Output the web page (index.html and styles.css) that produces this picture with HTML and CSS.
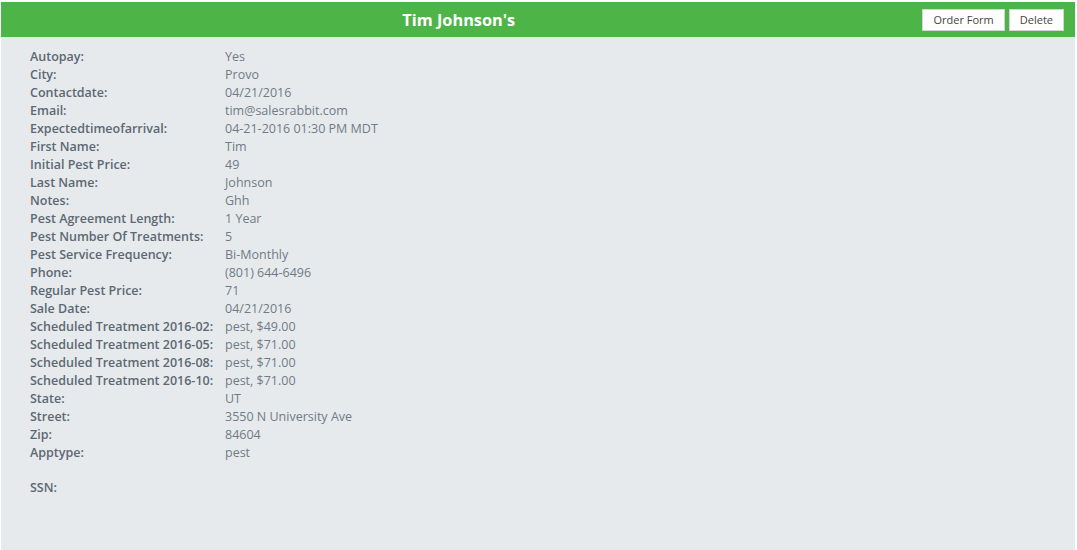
FILE: index.html
```html
<!DOCTYPE html>
<html lang="en">
<head>
  <meta charset="UTF-8">
  <meta name="viewport" content="width=device-width, initial-scale=1.0">
  <title>Tim Johnson's</title>
  <link rel="stylesheet" href="styles.css">
</head>
<body>
  <div class="panel">
    <div class="panel-header">
      <div class="panel-title">Tim Johnson's</div>
      <div class="panel-actions">
        <button class="btn">Order Form</button>
        <button class="btn">Delete</button>
      </div>
    </div>
    <div class="panel-body">
      <div class="row"><div class="label">Autopay:</div><div class="value">Yes</div></div>
      <div class="row"><div class="label">City:</div><div class="value">Provo</div></div>
      <div class="row"><div class="label">Contactdate:</div><div class="value">04/21/2016</div></div>
      <div class="row"><div class="label">Email:</div><div class="value">tim@salesrabbit.com</div></div>
      <div class="row"><div class="label">Expectedtimeofarrival:</div><div class="value">04-21-2016 01:30 PM MDT</div></div>
      <div class="row"><div class="label">First Name:</div><div class="value">Tim</div></div>
      <div class="row"><div class="label">Initial Pest Price:</div><div class="value">49</div></div>
      <div class="row"><div class="label">Last Name:</div><div class="value">Johnson</div></div>
      <div class="row"><div class="label">Notes:</div><div class="value">Ghh</div></div>
      <div class="row"><div class="label">Pest Agreement Length:</div><div class="value">1 Year</div></div>
      <div class="row"><div class="label">Pest Number Of Treatments:</div><div class="value">5</div></div>
      <div class="row"><div class="label">Pest Service Frequency:</div><div class="value">Bi-Monthly</div></div>
      <div class="row"><div class="label">Phone:</div><div class="value">(801) 644-6496</div></div>
      <div class="row"><div class="label">Regular Pest Price:</div><div class="value">71</div></div>
      <div class="row"><div class="label">Sale Date:</div><div class="value">04/21/2016</div></div>
      <div class="row"><div class="label">Scheduled Treatment 2016-02:</div><div class="value">pest, $49.00</div></div>
      <div class="row"><div class="label">Scheduled Treatment 2016-05:</div><div class="value">pest, $71.00</div></div>
      <div class="row"><div class="label">Scheduled Treatment 2016-08:</div><div class="value">pest, $71.00</div></div>
      <div class="row"><div class="label">Scheduled Treatment 2016-10:</div><div class="value">pest, $71.00</div></div>
      <div class="row"><div class="label">State:</div><div class="value">UT</div></div>
      <div class="row"><div class="label">Street:</div><div class="value">3550 N University Ave</div></div>
      <div class="row"><div class="label">Zip:</div><div class="value">84604</div></div>
      <div class="row"><div class="label">Apptype:</div><div class="value">pest</div></div>
      <div class="row row-gap"><div class="label">SSN:</div><div class="value"></div></div>
    </div>
  </div>
</body>
</html>
```

FILE: styles.css
```css
body {
  margin: 0;
  background-color: #fff;
  font-family: 'Open Sans', sans-serif;
}

.panel {
  margin: 2px 2px 0 1px;
  height: 548px;
  background-color: #e6eaed;
}

.panel-header {
  display: flex;
  align-items: center;
  height: 35px;
  background-color: #4db548;
}

.panel-title {
  flex: 1;
  text-align: center;
  color: #fff;
  font-size: 16.3px;
  font-weight: bold;
  padding-right: 6px;
}

.panel-actions {
  display: flex;
  gap: 4px;
  padding-right: 11px;
}

.btn {
  background-color: #fff;
  color: #444;
  border: 1px solid #d5d5d5;
  padding: 0 10px;
  height: 22px;
  font-family: 'Open Sans', sans-serif;
  font-size: 11px;
  cursor: pointer;
}

.panel-body {
  padding: 11px 29px;
}

.row {
  display: flex;
  font-size: 12.5px;
  line-height: 18px;
  min-height: 18px;
}

.row-gap {
  margin-top: 17px;
}

.label {
  width: 195px;
  color: #5d6872;
  font-weight: 600;
}

.value {
  color: #717b85;
}
```
